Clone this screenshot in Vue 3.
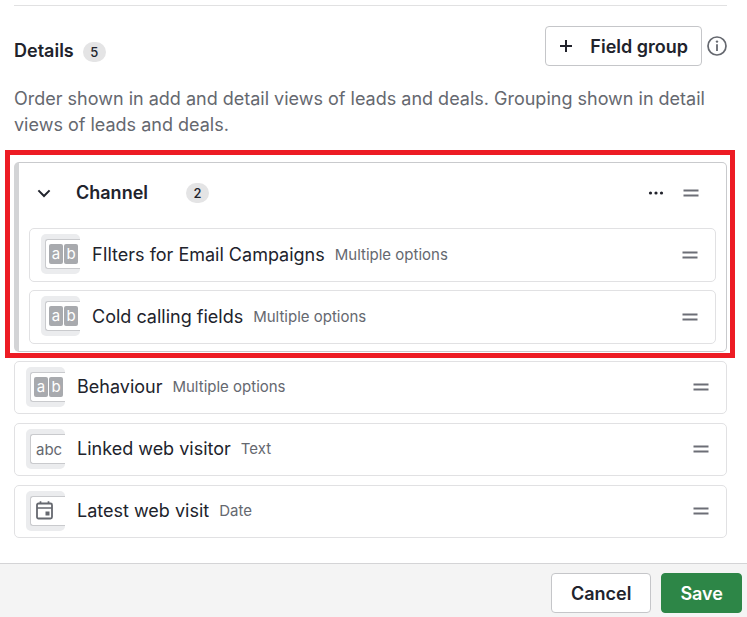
<script setup>
import { ref } from 'vue'

const groupOpen = ref(true)

const groupFields = [
  { name: 'FIlters for Email Campaigns', type: 'Multiple options', kind: 'options' },
  { name: 'Cold calling fields', type: 'Multiple options', kind: 'options' }
]

const fields = [
  { name: 'Behaviour', type: 'Multiple options', kind: 'options' },
  { name: 'Linked web visitor', type: 'Text', kind: 'text' },
  { name: 'Latest web visit', type: 'Date', kind: 'date' }
]

const lists = { group: groupFields, rest: fields }
</script>

<template>
  <div class="page">
    <main class="content">
      <header class="head">
        <h2 class="title">Details</h2>
        <span class="badge">5</span>
        <button type="button" class="btn add">
          <svg width="14" height="14" viewBox="0 0 14 14" aria-hidden="true">
            <path d="M7 1v12M1 7h12" fill="none" stroke="#21232c" stroke-width="2" />
          </svg>
          Field group
        </button>
        <button type="button" class="bare info" aria-label="Information">
          <svg width="20" height="20" viewBox="0 0 20 20" aria-hidden="true">
            <circle cx="10" cy="10" r="9" fill="none" stroke="#65686f" stroke-width="1.7" />
            <path d="M10 8.3v6.700" stroke="#65686f" stroke-width="1.8" />
            <circle cx="10" cy="5.600" r="1.2" fill="#65686f" />
          </svg>
        </button>
      </header>
      <p class="hint">
        Order shown in add and detail views of leads and deals. Grouping shown in detail views of leads and deals.
      </p>

      <div class="lists">
        <section v-for="(items, key) in lists" :key="key" :class="key">
          <div v-if="key === 'group'" class="group-head">
            <button type="button" class="bare toggle" aria-label="Toggle group" @click="groupOpen = !groupOpen">
              <svg width="14" height="14" viewBox="0 0 14 14" aria-hidden="true">
                <path d="M1.400 4.400 7 10l5.600-5.600" fill="none" stroke="#21232c" stroke-width="2" />
              </svg>
            </button>
            <h3 class="title group-name">Channel</h3>
            <span class="badge">2</span>
            <button type="button" class="bare more" aria-label="More">
              <svg width="16" height="16" viewBox="0 0 16 16" fill="#21232c" aria-hidden="true">
                <circle cx="2.500" cy="8" r="1.600" />
                <circle cx="8" cy="8" r="1.600" />
                <circle cx="13.500" cy="8" r="1.600" />
              </svg>
            </button>
            <button type="button" class="bare" aria-label="Reorder group">
              <svg width="16" height="16" viewBox="0 0 16 16" aria-hidden="true">
                <path d="M0.500 5.500h15M0.500 10.500h15" stroke="#6c6e76" stroke-width="2" />
              </svg>
            </button>
          </div>
          <ul v-show="key !== 'group' || groupOpen" class="rows">
            <li v-for="field in items" :key="field.name" class="row">
              <span class="tile">
                <span class="tile-box">
                  <template v-if="field.kind === 'options'">
                    <span class="chip">a</span>
                    <span class="chip">b</span>
                  </template>
                  <span v-else-if="field.kind === 'text'" class="abc">abc</span>
                  <svg v-else class="cal" width="18" height="20" viewBox="0 0 18 20" aria-hidden="true">
                    <rect x="1" y="2.500" width="15" height="15" rx="1.500" fill="none" stroke="#65686f" stroke-width="1.800" />
                    <path d="M1 7h15M4.500 0.300v2.800M12.500 0.300v2.800" fill="none" stroke="#65686f" stroke-width="1.700" />
                    <rect x="9.500" y="10.500" width="4" height="4" fill="#65686f" />
                  </svg>
                </span>
              </span>
              <span class="name">{{ field.name }}</span>
              <span class="type">{{ field.type }}</span>
              <button type="button" class="bare handle" :aria-label="'Reorder ' + field.name">
                <svg width="16" height="16" viewBox="0 0 16 16" aria-hidden="true">
                  <path d="M0.500 5.500h15M0.500 10.500h15" stroke="#6c6e76" stroke-width="2" />
                </svg>
              </button>
            </li>
          </ul>
        </section>
      </div>
    </main>

    <footer class="footer">
      <button type="button" class="btn">Cancel</button>
      <button type="button" class="btn save">Save</button>
    </footer>
  </div>
</template>

<style>
body {
  margin: 0;
  background: #fff;
}
</style>

<style scoped>
.page {
  display: flex;
  flex-direction: column;
  min-height: 100vh;
  box-sizing: border-box;
  padding-top: 5px;
  font-family: Inter, "Liberation Sans", sans-serif;
  font-size: 18px;
  color: #21232c;
}

.content {
  margin: 0 20px 25px 14px;
  border-top: 1px solid #e1e1e2;
  padding-top: 20px;
}

.head {
  display: flex;
  align-items: center;
}

.title {
  margin: 0;
  font-size: 18px;
  line-height: 26px;
  font-weight: 600;
}

.head .title {
  margin-top: 10px;
  margin-right: 9px;
}

.badge {
  width: 23px;
  height: 20px;
  border-radius: 10px;
  background: #e4e4e5;
  font-size: 13px;
  line-height: 20px;
  font-weight: 500;
  text-align: center;
}

.head .badge {
  margin-top: 12px;
}

.btn {
  display: flex;
  align-items: center;
  height: 40px;
  box-sizing: border-box;
  padding: 0 19px;
  border: 1px solid #c5c6c9;
  border-radius: 4px;
  background: #fff;
  color: #21232c;
  font: 600 18px Inter, "Liberation Sans", sans-serif;
}

.add {
  gap: 17px;
  margin-left: auto;
  padding: 0 13px;
}

.bare {
  display: flex;
  padding: 0;
  border: 0;
  background: none;
}

.info {
  margin-left: 5px;
}

.hint {
  margin: 20px 0 24px;
  padding-right: 20px;
  line-height: 26px;
  color: #65686f;
}

.lists {
  display: flex;
  flex-direction: column;
  gap: 9px;
}

.group {
  position: relative;
  border: 1px solid #c9cacd;
  border-left: 5px solid #d3d4d6;
  border-radius: 5px;
  padding: 0 10px 7px;
}

.group::after {
  content: "";
  position: absolute;
  inset: -13px -9px -7px -14px;
  border: 5px solid #ed1c24;
  pointer-events: none;
}

.group-head {
  display: flex;
  align-items: center;
  height: 60px;
  margin-bottom: 5px;
  padding: 0 17px 0 8px;
}

.group-name {
  margin: 0 38px 0 25px;
}

.more {
  margin: 0 19px 0 auto;
}

.rows {
  display: flex;
  flex-direction: column;
  gap: 8px;
  margin: 0;
  padding: 0;
  list-style: none;
}

.row {
  display: flex;
  align-items: center;
  box-sizing: border-box;
  height: 54px;
  padding: 0 17px 0 11px;
  border: 1px solid #e1e1e3;
  border-radius: 5px;
}

.rest .row {
  height: 53px;
  padding-bottom: 1px;
}

.rest .rows {
  gap: 9px;
}

.tile {
  flex: none;
  align-self: flex-start;
  box-sizing: border-box;
  width: 39px;
  height: 40px;
  margin-top: 5px;
  padding: 5px 0 5px 4px;
  border-radius: 5px;
  background: #ebecee;
}

.tile-box {
  display: flex;
  gap: 1px;
  align-items: center;
  box-sizing: border-box;
  height: 30px;
  padding-left: 3px;
  border: 1px solid #c9cacd;
  border-right: 0;
  border-radius: 3px 0 0 3px;
  background: #fff;
}

.chip {
  width: 14px;
  height: 20px;
  border-radius: 2px;
  background: #a8aaae;
  color: #fff;
  font-size: 15px;
  line-height: 19px;
  text-align: center;
}

.abc {
  padding-left: 2px;
  font-size: 15px;
  color: #65686f;
}

.cal {
  margin-left: 2px;
}

.name {
  margin: 0 10px 0 12px;
  line-height: 26px;
}

.type {
  font-size: 15px;
  line-height: 26px;
  color: #65686f;
}

.handle {
  margin-left: auto;
}

.footer {
  display: flex;
  justify-content: flex-end;
  gap: 10px;
  margin-top: auto;
  padding: 9px 5px 4px;
  border-top: 1px solid #d4d4d6;
  background: #f4f4f4;
}

.save {
  padding: 0 18px;
  border-color: #2d8647;
  background: #2d8647;
  color: #fff;
}
</style>
